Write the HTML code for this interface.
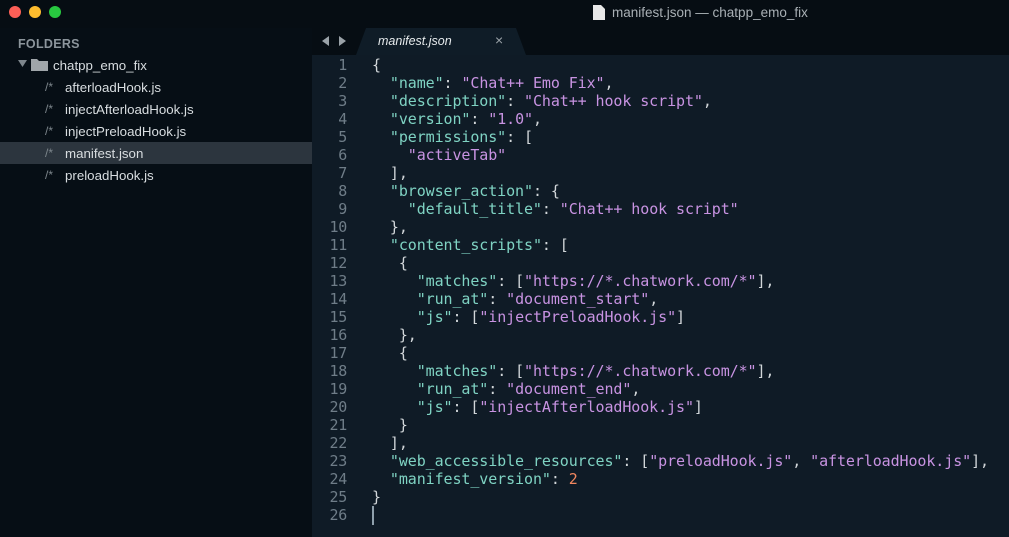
<!DOCTYPE html>
<html><head><meta charset="utf-8"><style>
*{margin:0;padding:0;box-sizing:border-box}
body{width:1009px;height:537px;background:#08121a;overflow:hidden;position:relative;font-family:"Liberation Sans",sans-serif}
.title{position:absolute;left:0;top:0;width:1009px;height:28px;background:#060d13}
.dot{position:absolute;top:6px;width:12px;height:12px;border-radius:50%}
.ttl{position:absolute;left:612px;top:5px;font-size:13.5px;color:#a9b0b5}
.side{position:absolute;left:0;top:28px;width:312px;height:509px;background:#060e15}
.fold{position:absolute;left:18px;top:9px;font-size:12.5px;font-weight:bold;color:#8c959c;letter-spacing:.3px}
.item{position:absolute;left:0;width:312px;height:22px;font-size:13.3px;color:#d8dde0;line-height:23px}
.item .c{position:absolute;left:45px;color:#7d868c;font-size:12px}
.item .n{position:absolute;left:65px}
.tabbar{position:absolute;left:312px;top:28px;width:697px;height:27px;background:#060d13}
.tab{position:absolute;left:44px;top:0;width:170px;height:27px;background:#0f1c27;clip-path:polygon(10px 0,160px 0,170px 27px,0 27px)}
.editor{position:absolute;left:312px;top:55px;width:697px;height:482px;background:#0f1b26}
pre{position:absolute;left:0;top:1px;font-family:"DejaVu Sans Mono",monospace;font-size:15px;letter-spacing:-.09px;line-height:18px;color:#d2d7da}
.ln{position:absolute;left:0;width:35px;text-align:right;color:#6f7d88;font-family:"DejaVu Sans Mono",monospace;font-size:15px;line-height:18px;top:1px;letter-spacing:-.3px}
.k{color:#7fd3c3}.s{color:#c893e2}.m{color:#f2875f}
</style></head><body>
<div class="title">
<div class="dot" style="left:9px;background:#fc5f57"></div>
<div class="dot" style="left:29px;background:#fdbc2e"></div>
<div class="dot" style="left:49px;background:#28c840"></div>
<svg style="position:absolute;left:593px;top:5px" width="12" height="15"><path d="M0 0H8L12 4V15H0Z" fill="#e8e8e8"/></svg>
<div class="ttl">manifest.json — chatpp_emo_fix</div>
</div>
<div class="side">
<div class="fold">FOLDERS</div>
<svg style="position:absolute;left:18px;top:32px" width="9" height="7"><path d="M0 0H9L4.5 7Z" fill="#7d868c"/></svg>
<svg style="position:absolute;left:31px;top:30px" width="18" height="13"><path d="M0 1H6L8 3H17V13H0Z" fill="#a0a6aa"/></svg>
<div class="item" style="top:26px"><span style="position:absolute;left:53px">chatpp_emo_fix</span></div>
<div class="item" style="top:48px"><span class="c">/*</span><span class="n">afterloadHook.js</span></div>
<div class="item" style="top:70px"><span class="c">/*</span><span class="n">injectAfterloadHook.js</span></div>
<div class="item" style="top:92px"><span class="c">/*</span><span class="n">injectPreloadHook.js</span></div>
<div class="item" style="top:114px;background:#2c353e"><span class="c">/*</span><span class="n">manifest.json</span></div>
<div class="item" style="top:136px"><span class="c">/*</span><span class="n">preloadHook.js</span></div>
</div>
<div class="tabbar">
<svg style="position:absolute;left:10px;top:8px" width="24" height="10"><path d="M0 5L7 0V10Z M24 5L17 0V10Z" fill="#9aa2a8"/></svg>
<div class="tab"><span style="position:absolute;left:22px;top:6px;font-size:12.5px;font-style:italic;color:#e6eaec">manifest.json</span><span style="position:absolute;left:139px;top:4px;font-size:14px;color:#9aa2a8">×</span></div>
</div>
<div class="editor">
<div class="ln">1<br>2<br>3<br>4<br>5<br>6<br>7<br>8<br>9<br>10<br>11<br>12<br>13<br>14<br>15<br>16<br>17<br>18<br>19<br>20<br>21<br>22<br>23<br>24<br>25<br>26</div>
<div style="position:absolute;left:60px;top:451px;width:2px;height:19px;background:#8fa0ac"></div>
<pre style="left:60px">{
  <span class="k">"name"</span>: <span class="s">"Chat++ Emo Fix"</span>,
  <span class="k">"description"</span>: <span class="s">"Chat++ hook script"</span>,
  <span class="k">"version"</span>: <span class="s">"1.0"</span>,
  <span class="k">"permissions"</span>: [
    <span class="s">"activeTab"</span>
  ],
  <span class="k">"browser_action"</span>: {
    <span class="k">"default_title"</span>: <span class="s">"Chat++ hook script"</span>
  },
  <span class="k">"content_scripts"</span>: [
   {
     <span class="k">"matches"</span>: [<span class="s">"https://*.chatwork.com/*"</span>],
     <span class="k">"run_at"</span>: <span class="s">"document_start"</span>,
     <span class="k">"js"</span>: [<span class="s">"injectPreloadHook.js"</span>]
   },
   {
     <span class="k">"matches"</span>: [<span class="s">"https://*.chatwork.com/*"</span>],
     <span class="k">"run_at"</span>: <span class="s">"document_end"</span>,
     <span class="k">"js"</span>: [<span class="s">"injectAfterloadHook.js"</span>]
   }
  ],
  <span class="k">"web_accessible_resources"</span>: [<span class="s">"preloadHook.js"</span>, <span class="s">"afterloadHook.js"</span>],
  <span class="k">"manifest_version"</span>: <span class="m">2</span>
}
</pre>
</div>
</body></html>
